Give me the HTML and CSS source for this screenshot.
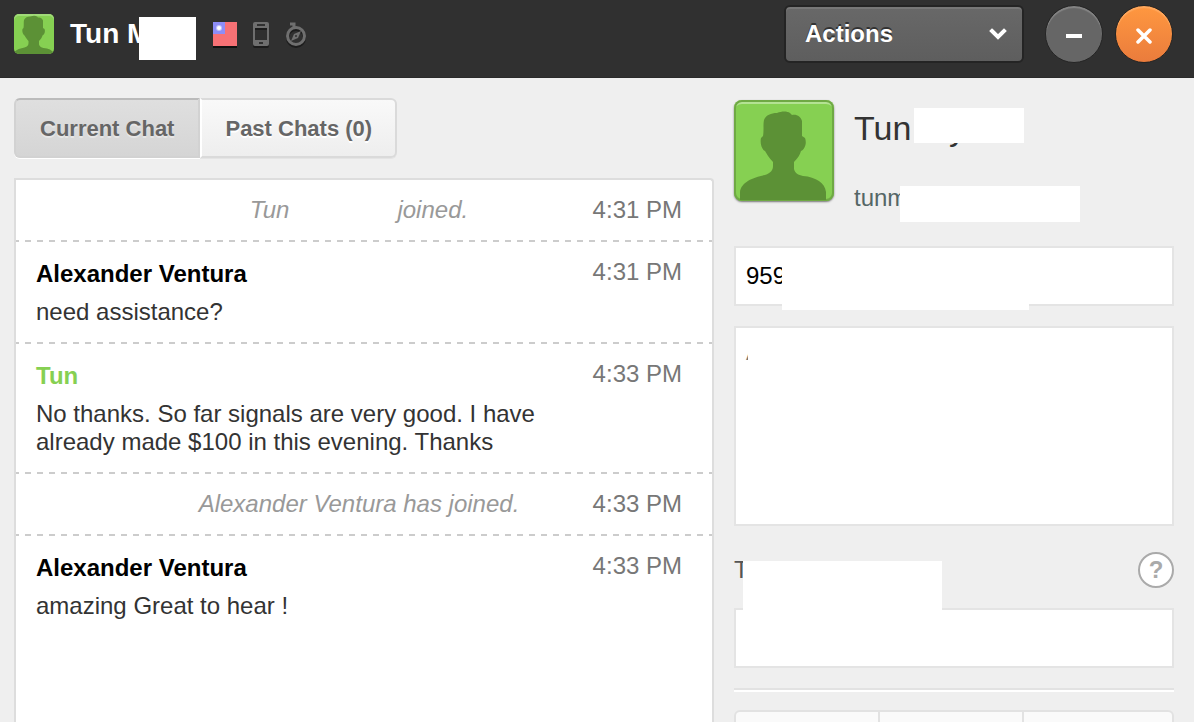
FILE: index.html
```html
<!DOCTYPE html>
<html lang="en">
<head>
    <meta charset="UTF-8">
    <meta name="viewport" content="width=device-width, initial-scale=1.0">
    <title>Chat</title>
    <link rel="stylesheet" href="styles.css">
</head>
<body>
    <svg class="defs" width="0" height="0" aria-hidden="true">
        <defs>
            <path id="person" d="M6 100V92C7 82 20 77 31 75C37 73 39 70 39 66V62C35 58 33 54 31 51C27 49 26 42 27 38L29 36C30 31 29 24 30 20C32 15 37 13 43 13C48 11 53 11 56 13L58 15C63 14 67 17 68 21V36L71 38C73 43 71 49 67 51C66 55 63 59 60 62V69C61 73 64 75 69 76C82 77 91 83 92 92V100Z" fill="#5c9136"/>
        </defs>
    </svg>

    <header class="topbar">
        <svg class="avatar-small" width="40" height="40" viewBox="10 8 80 80" aria-hidden="true"><use href="#person"/></svg>
        <h1 class="visitor">Tun My<span class="mask mask-visitor"></span></h1>
        <div class="visitor-icons">
            <svg width="24" height="26" viewBox="0 0 24 26" role="img" aria-label="Location">
                <rect y="2" width="24" height="24" fill="#111"/>
                <rect width="24" height="24" fill="#f77175"/>
                <rect width="12" height="12" fill="#8d8df7"/>
                <circle cx="6" cy="6" r="3" fill="#c3c3fb"/>
                <circle cx="6" cy="6" r="2" fill="#fff"/>
            </svg>
            <svg width="18" height="26" viewBox="0 0 18 26" role="img" aria-label="Mobile">
                <rect x="1" y="2" width="16" height="24" rx="2" fill="#1c1c1c"/>
                <rect x="3" y="2" width="12" height="20" fill="#303030"/>
                <path fill="#6f6f6f" fill-rule="evenodd" d="M3 0H15Q17 0 17 2V22Q17 24 15 24H3Q1 24 1 22V2Q1 0 3 0ZM5 2V4H13V2ZM3 6V18H15V6ZM7 20V22H11V20Z"/>
                <path d="M3 7H15" stroke="#1c1c1c" stroke-width="2"/>
            </svg>
            <svg width="22" height="27" viewBox="0 0 22 27" role="img" aria-label="Browser">
                <circle cx="11" cy="16" r="8.5" fill="none" stroke="#1c1c1c" stroke-width="3"/>
                <g fill="none" stroke="#6f6f6f" stroke-width="3">
                    <circle cx="11" cy="14" r="8.5"/>
                    <path d="M5 2H9V6"/>
                </g>
                <path d="M16 9L13 16L6 19L9 12Z" fill="#6f6f6f"/>
                <circle cx="11" cy="14" r="1" fill="#303030"/>
            </svg>
        </div>
        <div class="actions">
            <select class="actions-select" aria-label="Actions">
                <option>Actions</option>
            </select>
            <svg class="chevron" width="18" height="14" viewBox="0 0 18 14" aria-hidden="true"><path d="M3 4L9 10L15 4" fill="none" stroke="#fff" stroke-width="4" stroke-linecap="square"/></svg>
        </div>
        <button class="round minimize" type="button" aria-label="Minimize">
            <svg width="20" height="20" viewBox="0 0 20 20"><path d="M2 12H18" stroke="#fff" stroke-width="4"/></svg>
        </button>
        <button class="round close" type="button" aria-label="Close">
            <svg width="20" height="20" viewBox="0 0 20 20"><path d="M4 6L16 18M16 6L4 18" stroke="#fff" stroke-width="3.500" stroke-linecap="round"/></svg>
        </button>
    </header>

    <main class="content">
        <section class="chat">
            <div class="tabs">
                <button class="tab active" type="button">Current Chat</button>
                <button class="tab" type="button">Past Chats (0)</button>
            </div>
            <div class="log">
                <div class="row">
                    <p class="notice">Tun<span class="blank"></span>joined.</p>
                    <time class="time">4:31 PM</time>
                </div>
                <div class="row">
                    <div class="message">
                        <h2 class="author">Alexander Ventura</h2>
                        <p>need assistance?</p>
                    </div>
                    <time class="time">4:31 PM</time>
                </div>
                <div class="row">
                    <div class="message">
                        <h2 class="author guest">Tun</h2>
                        <p>No thanks. So far signals are very good. I have already made $100 in this evening. Thanks</p>
                    </div>
                    <time class="time">4:33 PM</time>
                </div>
                <div class="row">
                    <p class="notice">Alexander Ventura has joined.</p>
                    <time class="time">4:33 PM</time>
                </div>
                <div class="row">
                    <div class="message">
                        <h2 class="author">Alexander Ventura</h2>
                        <p>amazing Great to hear !</p>
                    </div>
                    <time class="time">4:33 PM</time>
                </div>
            </div>
        </section>

        <aside class="details">
            <div class="profile">
                <svg class="avatar" width="100" height="101" viewBox="0 0 100 101" aria-hidden="true"><use href="#person"/></svg>
                <div class="identity">
                    <h2 class="name">Tun My<span class="mask mask-name"></span></h2>
                    <p class="email">tunm<span class="mask mask-email"></span></p>
                </div>
            </div>
            <div class="field">
                <input class="box" type="text" value="959" aria-label="Phone">
                <span class="mask mask-phone"></span>
            </div>
            <div class="field">
                <textarea class="box notes" aria-label="Notes">A</textarea>
                <span class="mask mask-notes"></span>
            </div>
            <div class="field tags">
                <div class="tags-head">
                    <label for="tags">T</label>
                    <button class="help" type="button" aria-label="Help">?</button>
                </div>
                <input class="box" id="tags" type="text">
                <span class="mask mask-tags"></span>
            </div>
            <hr class="divider">
            <div class="stats">
                <div class="stat"></div>
                <div class="stat"></div>
                <div class="stat"></div>
            </div>
        </aside>
    </main>
</body>
</html>
```
FILE: styles.css
```css
* {
    box-sizing: border-box;
}
body {
    margin: 0;
    height: 100vh;
    overflow: hidden;
    display: flex;
    flex-direction: column;
    background: #efefef;
    color: #333;
    font-family: "Helvetica Neue", "Liberation Sans", Arial, sans-serif;
    font-size: 24px;
    line-height: 28px;
}
h1, h2, p {
    margin: 0;
    font-size: 24px;
}
button, input, textarea, select {
    font: inherit;
    border-radius: 0;
}
.defs {
    position: absolute;
}
.mask {
    position: absolute;
    background: #fff;
}

/* top bar */
.topbar {
    flex: none;
    display: flex;
    align-items: flex-start;
    height: 78px;
    padding: 5px 21px 0 14px;
    background: #303030;
    border-bottom: 1px solid #2a2a2a;
}
.avatar-small {
    margin-top: 9px;
    border-radius: 5px;
    background: #86d052;
    box-shadow: inset 0 2px #a0da78;
}
.visitor {
    position: relative;
    width: 126px;
    margin: 15px 0 0 16px;
    color: #fff;
    font-size: 28px;
}
.mask-visitor {
    left: 69px;
    top: -3px;
    width: 57px;
    height: 43px;
}
.visitor-icons {
    display: flex;
    gap: 15px;
    margin: 17px 0 0 17px;
}
.actions {
    position: relative;
    width: 240px;
    margin-left: auto;
}
.actions-select {
    display: block;
    appearance: none;
    width: 100%;
    height: 58px;
    padding: 0 48px 0 19px;
    border: 2px solid #242424;
    border-radius: 6px;
    background: linear-gradient(#686868, #5e5e5e);
    box-shadow: inset 0 2px #777;
    color: #fff;
    font-weight: bold;
    text-shadow: 0 -2px #333;
}
.chevron {
    position: absolute;
    right: 17px;
    top: 22px;
    pointer-events: none;
}
.round {
    display: flex;
    align-items: center;
    justify-content: center;
    width: 58px;
    height: 58px;
    padding: 0;
    border: 1px solid #242424;
    border-radius: 50%;
    background: #666;
    box-shadow: inset 0 2px 1px #858585;
}
.minimize {
    margin: 0 12px 0 21px;
}
.close {
    background: linear-gradient(#ff9840, #ea7c3c);
    box-shadow: inset 0 2px 1px #ffa95f;
}

.content {
    flex: 1;
    min-height: 0;
    display: flex;
    gap: 20px;
    padding: 20px 20px 0 14px;
}

/* chat column */
.chat {
    flex: 1;
    min-width: 0;
    display: flex;
    flex-direction: column;
    gap: 20px;
}
.tabs {
    display: flex;
}
.tab {
    height: 60px;
    padding: 2px 23px 0;
    border: 2px solid #dadada;
    border-left: 2px solid #fff;
    border-radius: 0 6px 6px 0;
    background: linear-gradient(#f9f9f9, #eee);
    box-shadow: 0 1px #e4e4e4;
    color: #666;
    font-size: 22px;
    font-weight: bold;
    text-shadow: 0 2px #fff;
}
.tab.active {
    padding: 2px 24px 0;
    border-color: #bbb #d2d2d2 #d2d2d2;
    border-radius: 6px 0 0 6px;
    background: linear-gradient(#dfdfdf, #d5d5d5);
    box-shadow: 0 1px #fff;
    text-shadow: 0 2px #e6e6e6;
}
.log {
    flex: 1;
    border: 2px solid #ddd;
    border-bottom: 0;
    border-radius: 0 4px 0 0;
    background: #fff;
}
.row {
    display: grid;
    grid-template-columns: 1fr 130px;
    padding: 16px 30px 16px 20px;
}
/* 6px dashes with 6px gaps under each row */
.row:not(:last-child) {
    padding-bottom: 18px;
    background: repeating-linear-gradient(90deg, #ccc 0 3px, transparent 3px 9px, #ccc 9px 12px) left bottom / 100% 2px no-repeat;
}
.notice {
    grid-area: 1 / 1 / 2 / 3;
    color: #999;
    font-style: italic;
    text-align: center;
}
.blank {
    display: inline-block;
    width: 108px;
}
.message {
    margin-top: 2px;
}
.author {
    margin-bottom: 10px;
    color: #000;
}
.author.guest {
    color: #86d052;
}
.time {
    grid-area: 1 / 2;
    color: #777;
    text-align: right;
}

/* visitor details */
.details {
    flex: none;
    display: flex;
    flex-direction: column;
    width: 440px;
    padding-top: 2px;
}
.profile {
    display: flex;
    gap: 20px;
    height: 146px;
}
.avatar {
    border-radius: 8px;
    background: #86d052;
    box-shadow: inset 0 0 0 2px #6fa944, inset 0 4px #b4e293, 0 1px 2px #777;
}
.identity {
    padding-top: 8px;
}
.name,
.email {
    position: relative;
}
.name {
    margin-bottom: 36px;
    font-size: 34px;
    font-weight: normal;
    line-height: 40px;
}
.mask-name {
    left: 60px;
    top: 0;
    width: 110px;
    height: 35px;
}
.email {
    color: #566;
}
.mask-email {
    left: 46px;
    top: 2px;
    width: 180px;
    height: 36px;
}
.field {
    position: relative;
    margin-bottom: 20px;
}
.box {
    display: block;
    width: 100%;
    height: 60px;
    padding: 0 10px;
    border: 2px solid #e4e4e4;
    background: #fff;
    color: #000;
}
.mask-phone {
    left: 48px;
    top: 4px;
    width: 247px;
    height: 60px;
}
.notes {
    height: 200px;
    padding-top: 10px;
    color: #777;
    resize: none;
}
.mask-notes {
    left: 14px;
    top: 8px;
    width: 240px;
    height: 40px;
}
.tags-head {
    display: flex;
    justify-content: space-between;
    height: 82px;
    padding-top: 26px;
    color: #555;
}
.tags-head label {
    margin-top: 4px;
}
.help {
    width: 36px;
    height: 36px;
    padding: 0;
    border: 2px solid #aaa;
    border-radius: 50%;
    background: #fff;
    color: #aaa;
    font-weight: bold;
}
.tags {
    margin-top: -20px;
}
.mask-tags {
    left: 9px;
    top: 35px;
    width: 199px;
    height: 50px;
}
.divider {
    flex: none;
    width: 100%;
    height: 4px;
    margin: 0 0 18px;
    border: 0;
    border-top: 2px solid #e2e2e2;
    background: #fff;
}
.stats {
    flex: 1;
    display: grid;
    grid-template-columns: 33% 33% 1fr;
    border: 2px solid #e2e2e2;
    border-bottom: 0;
    border-radius: 6px 6px 0 0;
    background: #fafafa;
}
.stat:not(:last-child) {
    border-right: 2px solid #e2e2e2;
}
```
